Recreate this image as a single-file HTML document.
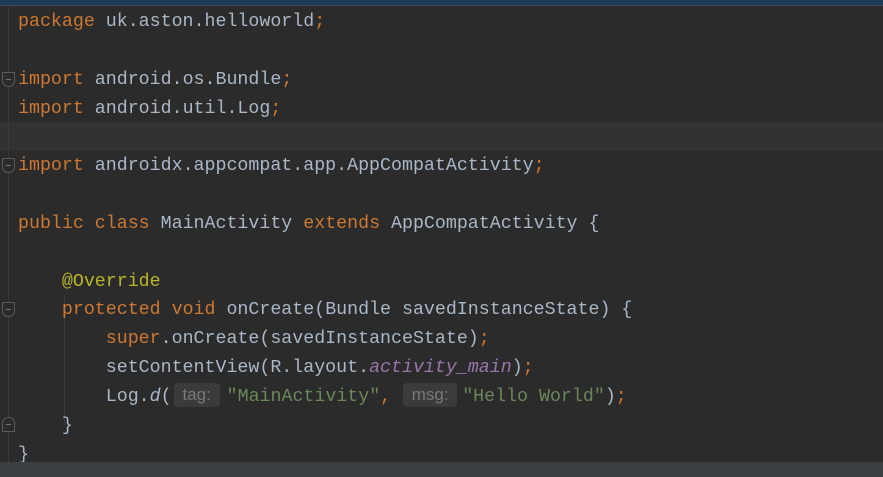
<!DOCTYPE html><html><head><style>
body{margin:0;width:883px;height:477px;background:#2b2b2b;overflow:hidden;position:relative;font-family:"Liberation Mono",monospace}
.top{position:absolute;left:0;top:0;width:883px;height:5px;background:#1f3a56;border-bottom:1px solid #3a4a5a}
.cur{position:absolute;left:0;top:122px;width:883px;height:29px;background:#323232}
.bot{position:absolute;left:0;top:462px;width:883px;height:15px;background:#3c3f41}
.gut{position:absolute;left:8px;top:6px;width:1px;height:456px;background:#3a3a3a}
.guide{position:absolute;width:1px;background:#3a3a3a}
pre{position:absolute;left:18px;top:8px;margin:0;font-size:18.3px;line-height:28.85px;color:#a9b7c6;font-family:"Liberation Mono",monospace}
.k{color:#cc7832}.s{color:#6a8759}.a{color:#bbb529}.p{color:#9876aa;font-style:italic}.i{font-style:italic}
.h{display:inline-block;background:#3b3b3b;color:#787878;font-family:"Liberation Sans",sans-serif;font-size:17px;border-radius:4px;text-align:center;line-height:24px;vertical-align:1px}
.f{position:absolute;left:2px;width:13px;height:15px;border:1px solid #5a5a5a;box-sizing:border-box;background:#2b2b2b}
.f:after{content:"";position:absolute;left:3px;top:6px;width:5px;height:1px;background:#777}
</style></head><body>
<div class="top"></div><div class="cur"></div><div class="gut"></div>
<div class="guide" style="left:64px;top:295px;height:130px"></div>
<div class="f" style="top:72px;border-radius:0 0 6px 6px"></div>
<div class="f" style="top:158px;border-radius:0 0 6px 6px"></div>
<div class="f" style="top:302px;border-radius:0 0 6px 6px"></div>
<div class="f" style="top:417px;border-radius:6px 6px 0 0"></div>
<pre><span class="k">package</span> uk.aston.helloworld<span class="k">;</span>

<span class="k">import</span> android.os.Bundle<span class="k">;</span>
<span class="k">import</span> android.util.Log<span class="k">;</span>

<span class="k">import</span> androidx.appcompat.app.AppCompatActivity<span class="k">;</span>

<span class="k">public class</span> MainActivity <span class="k">extends</span> AppCompatActivity {

    <span class="a">@Override</span>
    <span class="k">protected void</span> onCreate(Bundle savedInstanceState) {
        <span class="k">super</span>.onCreate(savedInstanceState)<span class="k">;</span>
        setContentView(R.layout.<span class="p">activity_main</span>)<span class="k">;</span>
        Log.<span class="i">d</span>(<span class="h" style="width:46px;margin:0 7px 0 2px">tag:</span><span class="s">"MainActivity"</span><span class="k">,</span> <span class="h" style="width:54px;margin:0 5px 0 1px">msg:</span><span class="s">"Hello World"</span>)<span class="k">;</span>
    }
}</pre>
<div class="bot"></div>
</body></html>
